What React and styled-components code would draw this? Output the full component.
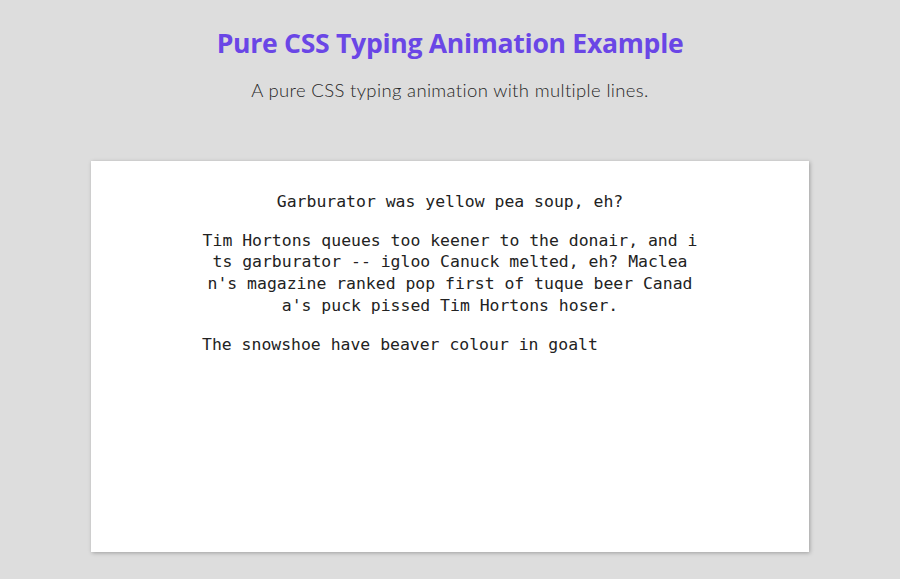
import React from 'react';
import styled, { createGlobalStyle } from 'styled-components';

const GlobalStyle = createGlobalStyle`
  html, body {
    margin: 0;
    padding: 0;
    background: #dddddd;
  }
  body {
    font-family: Lato, "Open Sans", sans-serif;
  }
`;

const Page = styled.div`
  display: flex;
  flex-direction: column;
  align-items: center;
  min-height: 579px;
  padding-top: 26px;
  box-sizing: border-box;
`;

const Title = styled.h1`
  margin: 0;
  font-family: "Open Sans", "Noto Sans", sans-serif;
  font-weight: 700;
  font-size: 26.6px;
  line-height: 34px;
  letter-spacing: -0.3px;
  color: #6a46e6;
`;

const Subtitle = styled.p`
  margin: 19px 0 0;
  font-family: Lato, "Open Sans", sans-serif;
  font-weight: 300;
  font-size: 18.5px;
  line-height: 22px;
  letter-spacing: 0.35px;
  color: #262626;
`;

const Card = styled.section`
  margin-top: 60px;
  width: 718px;
  height: 391px;
  box-sizing: border-box;
  background: #ffffff;
  box-shadow: 1px 1px 4px rgba(0, 0, 0, 0.28);
  padding-top: 30px;
  display: flex;
  flex-direction: column;
  align-items: center;
`;

const Terminal = styled.div`
  width: 496px;
  margin-left: 0;
  font-family: "DejaVu Sans Mono", "Liberation Mono", monospace;
  font-size: 16.45px;
  line-height: 21.7px;
  color: #222222;
`;

const Line = styled.p`
  margin: 0 0 17px;
  text-align: ${p => (p.$typing ? 'left' : 'center')};
  word-break: break-all;
  white-space: pre-wrap;
`;

const lines = [
  { text: 'Garburator was yellow pea soup, eh?' },
  {
    text:
      "Tim Hortons queues too keener to the donair, and its garburator -- igloo Canuck melted, eh? Maclean's magazine ranked pop first of tuque beer Canada's puck pissed Tim Hortons hoser.",
  },
  { text: 'The snowshoe have beaver colour in goalt', typing: true },
];

export default function App() {
  return (
    <>
      <GlobalStyle />
      <Page>
        <Title>Pure CSS Typing Animation Example</Title>
        <Subtitle>A pure CSS typing animation with multiple lines.</Subtitle>
        <Card>
          <Terminal>
            {lines.map((l, i) => (
              <Line key={i} $typing={l.typing}>
                {l.text}
              </Line>
            ))}
          </Terminal>
        </Card>
      </Page>
    </>
  );
}
